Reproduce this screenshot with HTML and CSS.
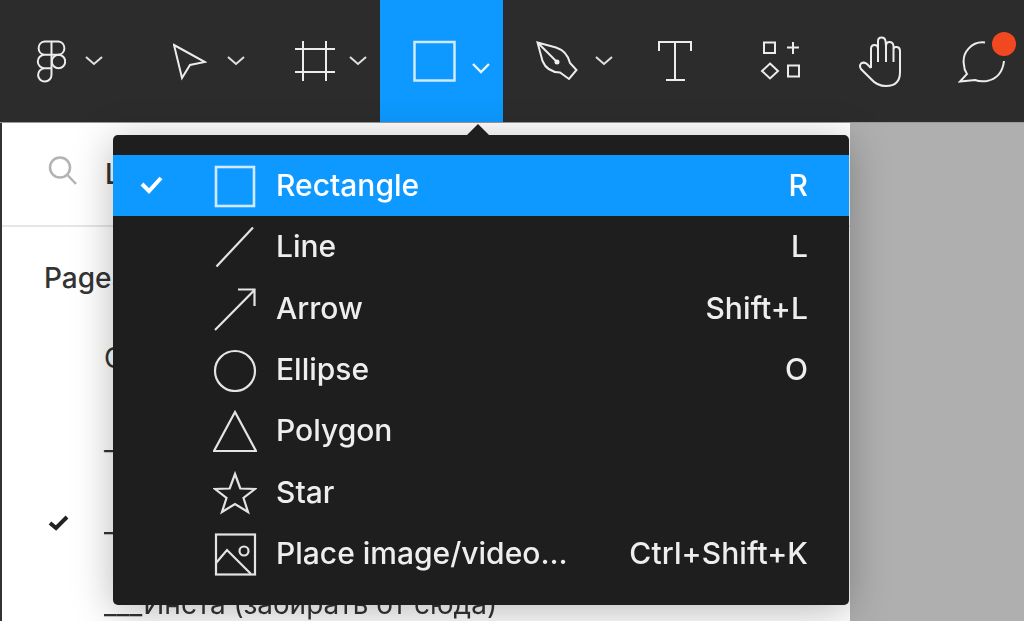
FILE: index.html
```html
<!DOCTYPE html>
<html lang="en">
<head>
<meta charset="utf-8">
<title>Figma shape menu</title>
<link rel="stylesheet" href="styles.css">
</head>
<body>
<div class="app">
  <header class="toolbar">
    <div class="tool tool-main">
      <svg class="ico" width="30" height="122" viewBox="36 0 30 122"><path d="M51.5 41.5H44.5A6.7 6.7 0 0 0 44.5 54.8H58.5A6.7 6.7 0 0 0 58.5 41.5H44.5M44.5 54.8A6.7 6.7 0 0 0 44.5 68.2H51.5V41.5M44.5 68.2A6.7 6.7 0 1 0 51.5 74.8V68.2"/><circle cx="58.5" cy="61.5" r="6.7"/></svg>
      <svg class="chev" width="18" height="122" viewBox="0 0 18 122"><path d="M1 57L9 64L17 57"/></svg>
    </div>
    <div class="tool tool-move">
      <svg class="ico" width="34" height="122" viewBox="173 0 34 122"><path d="M174 45L205 62L190 65L182 78Z"/></svg>
      <svg class="chev" width="18" height="122" viewBox="0 0 18 122"><path d="M1 57L9 64L17 57"/></svg>
    </div>
    <div class="tool tool-frame">
      <svg class="ico" width="40" height="122" viewBox="295 0 40 122"><path d="M303 41V81M326 41V81M295 49H335M295 72H335"/></svg>
      <svg class="chev" width="18" height="122" viewBox="0 0 18 122"><path d="M1 57L9 64L17 57"/></svg>
    </div>
    <div class="tool tool-shape">
      <svg class="ico ico-soft" width="43" height="122" viewBox="413 0 43 122"><rect x="414.5" y="42" width="40" height="38.5"/></svg>
      <svg class="chev chev-on" width="18" height="122" viewBox="0 0 18 122"><path d="M1 64L9 72L17 64"/></svg>
    </div>
    <div class="tool tool-pen">
      <svg class="ico" width="42" height="122" viewBox="536 0 42 122"><path d="M537.5 42.5L556 47.5Q567 51 570 63L576.5 70L569 79L560 72.5Q547 72 542.5 61ZM537.5 42.5L556 61"/><circle class="dot" cx="557" cy="62" r="2.5"/></svg>
      <svg class="chev" width="18" height="122" viewBox="0 0 18 122"><path d="M1 57L9 64L17 57"/></svg>
    </div>
    <div class="tool tool-text">
      <svg class="ico" width="34" height="122" viewBox="658 0 34 122"><path d="M659 51V42H691V51M675 42V80M666 80H685"/></svg>
    </div>
    <div class="tool tool-comp">
      <svg class="ico" width="42" height="122" viewBox="760 0 42 122"><rect x="764" y="42.5" width="11" height="10.5"/><path d="M793 42V54M787 47.500H799"/><path d="M770 63.500L778 71L770 78.500L762 71Z"/><rect x="788" y="65.500" width="11" height="11"/></svg>
    </div>
    <div class="tool tool-hand">
      <svg class="ico" width="47" height="122" viewBox="858 0 47 122"><path d="M871 68V49Q871 45 874.500 45Q878 45 878 49V41Q878 37.500 881.500 37.500Q885 37.500 885.500 41L886 46Q886 42 889.500 42Q893 42 893.500 46V49Q894 46.500 897 47Q900 47.500 900 51V72Q900 86 886 86Q877 86 871 79L861 69Q859 66 861 63.500Q864 61.500 867 64L871 68M878 49V62M886 46V62M893.500 49V62"/></svg>
    </div>
    <div class="tool tool-comment">
      <svg class="ico" width="60" height="122" viewBox="958 0 60 122"><path d="M985 42.500A19 19 0 0 0 964 65Q964 70 967 74L960 81.500L975 80Q980 82 987 81Q1002 78 1004 61"/><circle class="badge" cx="1004" cy="44" r="12"/></svg>
    </div>
  </header>

  <div class="stage">
    <aside class="sidebar">
      <div class="search">
        <svg width="30" height="34" viewBox="0 0 30 34"><circle cx="12" cy="10.500" r="10"/><path d="M19 17.500L28 27"/></svg>
        <span class="search-label">Layers</span>
      </div>
      <h2 class="pages-title">Pages</h2>
      <ul class="pages">
        <li class="page"><span class="page-check"></span><span>Cover</span></li>
        <li class="page"><span class="page-check"></span><span>___Шапка</span></li>
        <li class="page"><span class="page-check"><svg width="24" height="20" viewBox="0 0 24 20"><path d="M3 11L9 16L20 5"/></svg></span><span>___Рабочая</span></li>
        <li class="page"><span class="page-check"></span><span>___Инста (забирать от сюда)</span></li>
      </ul>
    </aside>
    <main class="canvas"></main>
  </div>

  <div class="menu">
    <span class="caret"></span>
    <div class="item item-on">
      <svg class="tick" width="26" height="20" viewBox="0 0 26 20"><path d="M3 9L10 16L22 3"/></svg>
      <svg class="mi" width="44" height="44" viewBox="0 0 44 44"><rect x="3" y="3" width="38" height="39"/></svg>
      <span class="label">Rectangle</span><span class="key">R</span>
    </div>
    <div class="item">
      <svg class="mi" width="44" height="44" viewBox="0 0 44 44"><path d="M3.500 41.500L40 2.500"/></svg>
      <span class="label">Line</span><span class="key">L</span>
    </div>
    <div class="item">
      <svg class="mi" width="44" height="44" viewBox="0 0 44 44"><path d="M2 43L41.500 3M25 2.500H41.500V19"/></svg>
      <span class="label">Arrow</span><span class="key">Shift+L</span>
    </div>
    <div class="item">
      <svg class="mi" width="44" height="44" viewBox="0 0 44 44"><circle cx="22" cy="23" r="20"/></svg>
      <span class="label">Ellipse</span><span class="key">O</span>
    </div>
    <div class="item">
      <svg class="mi" width="44" height="44" viewBox="0 0 44 44"><path d="M22 3L43 42H1Z"/></svg>
      <span class="label">Polygon</span><span class="key"></span>
    </div>
    <div class="item">
      <svg class="mi" width="44" height="44" viewBox="0 0 44 44"><path d="M22 3L27.300 17.500L42 18L30.500 27L35 41L22 33L9 41L13.500 27L2 18L16.700 17.500Z"/></svg>
      <span class="label">Star</span><span class="key"></span>
    </div>
    <div class="item">
      <svg class="mi" width="44" height="44" viewBox="0 0 44 44"><rect x="3" y="2.500" width="39" height="40"/><circle cx="31" cy="19" r="4.500"/><path d="M3 31L14 18L38 42"/></svg>
      <span class="label">Place image/video...</span><span class="key">Ctrl+Shift+K</span>
    </div>
  </div>
</div>
</body>
</html>
```
FILE: styles.css
```css
* { box-sizing: border-box; }
html, body { margin: 0; height: 100%; overflow: hidden; background: #2c2c2c; }
body { font-family: Inter, "Noto Sans", sans-serif; }

.app {
  position: relative;
  width: 1024px;
  height: 621px;
  overflow: hidden;
  display: flex;
  flex-direction: column;
  filter: blur(0.7px);
}

/* toolbar */
.toolbar { display: flex; height: 122px; flex: none; background: #2c2c2c; }
.tool { display: flex; height: 122px; flex: none; }
.tool svg { display: block; flex: none; }
.ico * { fill: none; stroke: #ececec; stroke-width: 2; }
.ico .dot { fill: #f0f0f0; stroke: none; }
.ico .badge { fill: #f24822; stroke: none; }
.ico-soft * { stroke: #cfeaff; stroke-width: 2.5; }
.chev path { fill: none; stroke: #e0e0e0; stroke-width: 2; }
.chev-on path { stroke: #e8f5ff; stroke-width: 2.4; }

.tool-main { width: 127px; padding-left: 36px; gap: 19px; }
.tool-move { width: 127px; padding-left: 46px; gap: 20px; }
.tool-frame { width: 126px; padding-left: 41px; gap: 14px; }
.tool-shape { width: 123px; padding-left: 33px; gap: 16px; background: #0d99ff; }
.tool-pen { width: 122px; padding-left: 33px; gap: 17px; }
.tool-text { width: 103px; padding-left: 33px; }
.tool-comp { width: 102px; padding-left: 32px; }
.tool-hand { width: 102px; padding-left: 28px; }
.tool-comment { width: 92px; padding-left: 26px; }

/* body */
.stage { flex: 1; display: flex; min-height: 0; border-top: 1px solid #9a9a9a; }
.sidebar {
  width: 850px;
  flex: none;
  background: #fff;
  border-left: 2px solid #333;
  color: #333;
  font-size: 28px;
}
.canvas { flex: 1; background: #afafaf; }

.search {
  display: flex;
  align-items: center;
  height: 104px;
  padding-left: 46px;
  gap: 27px;
  border-bottom: 2px solid #e6e6e6;
}
.search svg { overflow: visible; }
.search svg * { fill: none; stroke: #b3b3b3; stroke-width: 2.5; }
.search-label { font-weight: 500; }
.pages-title {
  margin: 0;
  padding: 34px 0 0 42px;
  height: 90px;
  font-size: 28px;
  line-height: 34px;
  font-weight: 500;
}
.pages { list-style: none; margin: 0; padding: 0; }
.page { display: flex; align-items: center; height: 82px; white-space: nowrap; }
.page-check { width: 102px; padding-left: 45px; flex: none; }
.page-check svg { display: block; }
.page-check path { fill: none; stroke: #222; stroke-width: 4; }

/* dropdown */
.menu {
  position: absolute;
  left: 113px;
  top: 135px;
  width: 736px;
  padding: 20px 0;
  background: #1e1e1e;
  border-radius: 5px;
  color: #eee;
  box-shadow: 0 6px 40px rgba(0, 0, 0, .28);
}
.caret {
  position: absolute;
  left: 354px;
  top: -11px;
  border-left: 11px solid transparent;
  border-right: 11px solid transparent;
  border-bottom: 11px solid #1e1e1e;
}
.item {
  display: flex;
  align-items: center;
  height: 61.44px;
  padding: 0 41px 0 100px;
  font-size: 30px;
  position: relative;
}
.item-on { background: #0d99ff; color: #fff; }
.tick { position: absolute; left: 26px; top: 20px; }
.tick path { fill: none; stroke: #fff; stroke-width: 4; }
.mi { flex: none; margin-right: 19px; }
.mi * { fill: none; stroke: #e4e4e4; stroke-width: 2.2; }
.item-on .mi * { stroke: #cfeaff; stroke-width: 2.6; }
.label { flex: 1; font-weight: 500; padding-bottom: 2px; }
.key { font-weight: 500; letter-spacing: 0.1px; padding-bottom: 2px; }
```
